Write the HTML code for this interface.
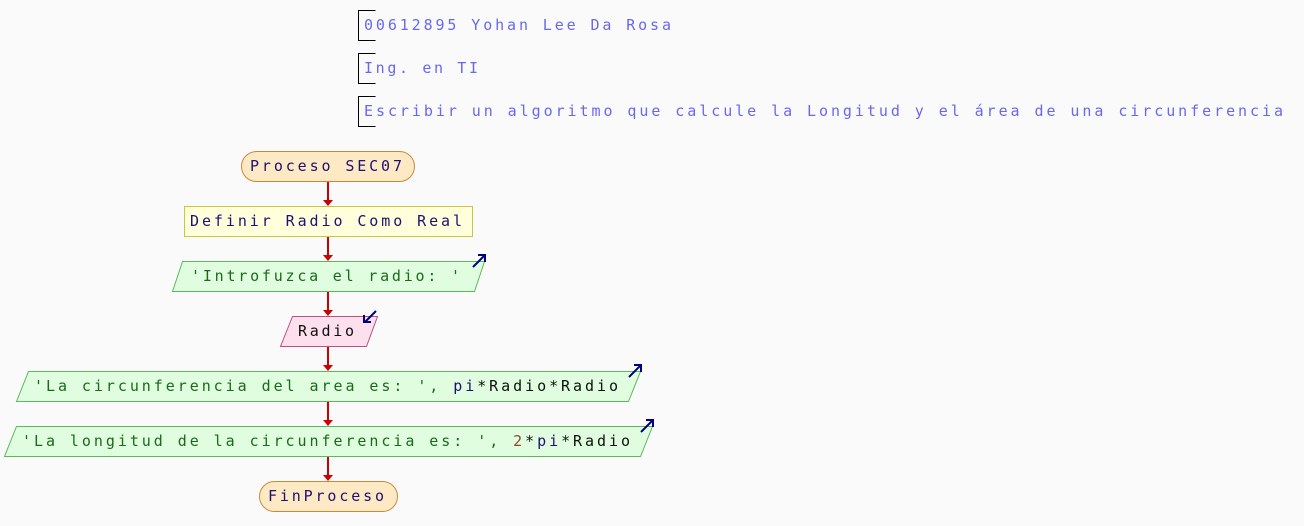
<!DOCTYPE html>
<html><head><meta charset="utf-8"><style>
html,body{margin:0;padding:0;background:#fafafa;}
svg{display:block}
text{font-family:"DejaVu Sans Mono","Liberation Mono",monospace;font-size:15px;}
</style></head><body>
<svg width="1304" height="526" xmlns="http://www.w3.org/2000/svg">
<rect width="1304" height="526" fill="#fafafa"/>
<g stroke="#000" stroke-width="1" fill="none">
<path d="M375.5 10.5H358.5V40.5H375.5"/>
<path d="M375.5 53.5H358.5V83.5H375.5"/>
<path d="M375.5 96.5H358.5V126.5H375.5"/>
</g>
<g fill="#6868f0">
<text x="364" y="30" textLength="307" lengthAdjust="spacing">00612895 Yohan Lee Da Rosa</text>
<text x="364" y="73" textLength="114" lengthAdjust="spacing">Ing. en TI</text>
<text x="364" y="116" textLength="919" lengthAdjust="spacing">Escribir un algoritmo que calcule la Longitud y el área de una circunferencia</text>
</g>
<g stroke="#cc0000" stroke-width="2">
<line x1="328" y1="181" x2="328" y2="202"/>
<line x1="328" y1="236" x2="328" y2="257"/>
<line x1="328" y1="291" x2="328" y2="312"/>
<line x1="328" y1="346" x2="328" y2="367"/>
<line x1="328" y1="401" x2="328" y2="422"/>
<line x1="328" y1="456" x2="328" y2="477"/>
</g>
<g fill="#cc0000">
<path d="M323 200H333L328 206Z"/>
<path d="M323 255H333L328 261Z"/>
<path d="M323 310H333L328 316Z"/>
<path d="M323 365H333L328 371Z"/>
<path d="M323 420H333L328 426Z"/>
<path d="M323 475H333L328 481Z"/>
</g>
<rect x="241.5" y="151.5" width="173" height="30" rx="15" fill="#fde9c4" stroke="#c88a3a"/>
<rect x="184.5" y="206.5" width="288" height="30" fill="#ffffdc" stroke="#c8c83a"/>
<path d="M182.5 261.5H484.5L474.5 291.5H172.5Z" fill="#e0fde0" stroke="#5cb85c"/>
<path d="M292.5 316.5H377.5L366.5 346.5H280.5Z" fill="#fde0ee" stroke="#c05080"/>
<path d="M28.5 371.5H640.5L628.5 401.5H16.5Z" fill="#e0fde0" stroke="#5cb85c"/>
<path d="M16.5 426.5H652.5L640.5 456.5H4.5Z" fill="#e0fde0" stroke="#5cb85c"/>
<rect x="259.5" y="481.5" width="138" height="30" rx="15" fill="#fde9c4" stroke="#c88a3a"/>
<g stroke="#000080" stroke-width="2" fill="none">
<path d="M473 267L484 256M478 255H485V262"/>
<path d="M376 311L365 322M364 315V322H371"/>
<path d="M629 377L640 366M634 365H641V372"/>
<path d="M641 432L652 421M646 420H653V427"/>
</g>
<text x="250" y="171" fill="#201070" textLength="152" lengthAdjust="spacing">Proceso SEC07</text>
<text x="190" y="226" fill="#201070" textLength="272" lengthAdjust="spacing">Definir Radio Como Real</text>
<text x="191" y="281" fill="#1a6a1a" textLength="269" lengthAdjust="spacing">'Introfuzca el radio: '</text>
<text x="298" y="336" fill="#101010" textLength="56" lengthAdjust="spacing">Radio</text>
<text x="34" y="391" textLength="584" lengthAdjust="spacing"><tspan fill="#1a6a1a">'La circunferencia del area es: ', </tspan><tspan fill="#201070">pi</tspan><tspan fill="#101010">*Radio*Radio</tspan></text>
<text x="22" y="446" textLength="608" lengthAdjust="spacing"><tspan fill="#1a6a1a">'La longitud de la circunferencia es: ', </tspan><tspan fill="#8a4a2a">2</tspan><tspan fill="#101010">*</tspan><tspan fill="#201070">pi</tspan><tspan fill="#101010">*Radio</tspan></text>
<text x="268" y="501" fill="#201070" textLength="116" lengthAdjust="spacing">FinProceso</text>
</svg>
</body></html>
